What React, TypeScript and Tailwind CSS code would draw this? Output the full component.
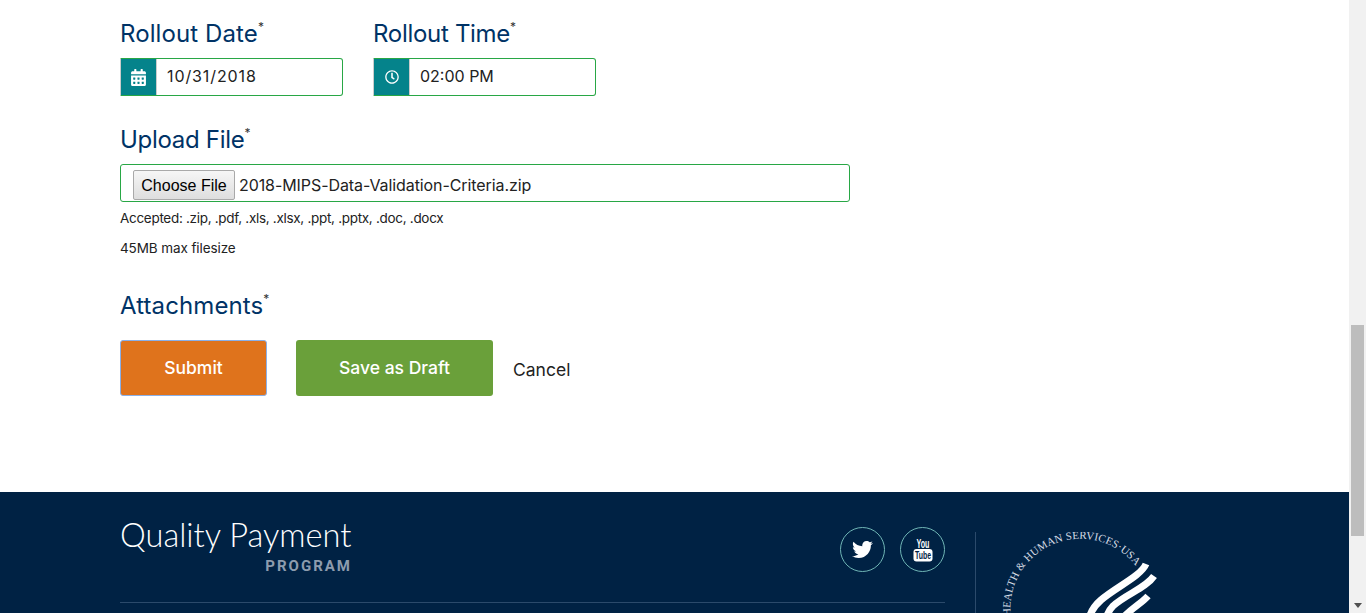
import { FaCalendarAlt, FaRegClock, FaTwitter } from "react-icons/fa";

const bodyFont = "font-['Inter','Noto_Sans',sans-serif]";

function FieldLabel({ text, tight }: { text: string; tight?: boolean }) {
  return (
    <label className={`flex h-[34px] items-start text-[24px] leading-[34px] text-[#003366] ${tight ? "tracking-[-0.3px]" : "tracking-[0.1px]"}`}>
      {text}
      <span className="text-[12px] leading-[20px] text-[#333]">*</span>
    </label>
  );
}

function AddonField({ label, value, icon, spread }: { label: string; value: string; icon: React.ReactNode; spread?: boolean }) {
  return (
    <div className="w-[223px]">
      <FieldLabel text={label} tight={!spread} />
      <div className="mt-[7px] flex h-[38px] rounded-r-[3px] border border-[#28a745] border-l-[#ccc]">
        <span className="flex w-[35px] items-center justify-center bg-[#05838b] text-white">{icon}</span>
        <span className={`flex flex-1 items-center border-l border-[#ccc] pb-[2px] pl-[10px] text-[16px] text-[#222] ${spread ? "tracking-[0.9px]" : ""}`}>{value}</span>
      </div>
    </div>
  );
}

function YouTubeStacked() {
  return (
    <svg className="h-[24px] w-[20px]" viewBox="0 0 20 24">
      <text x="10" y="9.5" fill="#fff" fontFamily="'Liberation Sans', sans-serif" fontSize="12" fontWeight="700" textAnchor="middle" textLength="13" lengthAdjust="spacingAndGlyphs">You</text>
      <rect x="0.5" y="11" width="19" height="12.5" rx="3" fill="#fff" />
      <text x="10" y="21" fill="#002244" fontFamily="'Liberation Sans', sans-serif" fontSize="11" fontWeight="700" textAnchor="middle" textLength="16" lengthAdjust="spacingAndGlyphs">Tube</text>
    </svg>
  );
}

function Seal() {
  return (
    <svg className="ml-[1px] h-[85px] w-[190px] shrink-0" viewBox="0 0 190 85">
      <defs>
        <path id="sealArc" d="M 34 86 A 70 70 0 0 1 158 33" />
      </defs>
      <text fill="#d5dbe3" fontFamily="'Liberation Serif', serif" fontSize="11" letterSpacing="0.1">
        <textPath href="#sealArc" startOffset="2">HEALTH &amp; HUMAN SERVICES·USA</textPath>
      </text>
      <g fill="none" stroke="#fff">
        <path d="M 169 32 C 164 44 139 55 124 68 C 117 74 113 80 111 90" strokeWidth="7" />
        <path d="M 177 44 C 169 56 149 62 136 74 C 131 79 129 85 127 92" strokeWidth="7" />
        <path d="M 171 64 C 164 72 154 76 144 88" strokeWidth="7" />
      </g>
    </svg>
  );
}

export default function App() {
  return (
    <div className={`flex h-[613px] w-full overflow-hidden bg-white ${bodyFont}`}>
      <div className="flex min-w-0 flex-1 flex-col">
        <main className="h-[492px] pl-[120px] pt-[17px]">
          <div className="flex gap-[30px]">
            <AddonField label="Rollout Date" value="10/31/2018" spread icon={<FaCalendarAlt className="text-[17px]" />} />
            <AddonField label="Rollout Time" value="02:00 PM" icon={<FaRegClock className="text-[14px]" />} />
          </div>

          <div className="mt-[27px] w-[730px]">
            <FieldLabel text="Upload File" tight />
            <div className="mt-[7px] flex h-[38px] items-center rounded-[3px] border border-[#28a745] pl-[12px] text-[16px] text-[#222]">
              <button className="mt-[4px] h-[30px] w-[102px] rounded-[2px] border border-[#a9a9a9] bg-gradient-to-b from-[#f6f6f6] to-[#dedede] pt-px font-['Liberation_Sans',sans-serif] text-[16px] text-black">
                Choose File
              </button>
              <span className="ml-[4px] mt-[4px] tracking-[-0.08px]">2018-MIPS-Data-Validation-Criteria.zip</span>
            </div>
          </div>
          <p className="mt-[6px] h-[20px] text-[13.5px] leading-[20px] tracking-[-0.3px] text-[#222]">Accepted: .zip, .pdf, .xls, .xlsx, .ppt, .pptx, .doc, .docx</p>
          <p className="mt-[10px] h-[20px] text-[13.5px] leading-[20px] tracking-[-0.1px] text-[#222]">45MB max filesize</p>

          <div className="mt-[31px]">
            <FieldLabel text="Attachments" />
          </div>

          <div className="mt-[17px] flex items-start">
            <button className="h-[56px] w-[147px] rounded-[3px] border border-[#8ab0e8] bg-[#df731c] text-[17.5px] font-medium text-white">
              Submit
            </button>
            <button className="ml-[29px] h-[56px] w-[197px] rounded-[3px] bg-[#6aa03a] text-[17.5px] font-medium text-white">
              Save as Draft
            </button>
            <span className="ml-[20px] mt-[18px] text-[17.5px] leading-[24px] text-[#222]">Cancel</span>
          </div>
        </main>

        <footer className="flex h-[121px] overflow-hidden bg-[#002244] pl-[120px] pt-[24px]">
          <div className="w-[825px] shrink-0">
            <div className="flex h-[87px] items-start justify-between border-b border-[#2b4a6b]">
              <div className="flex w-[232px] flex-col">
                <span className="whitespace-nowrap font-['Lato',sans-serif] text-[32.6px] font-light leading-[38px] text-white">Quality Payment</span>
                <span className="mt-[4px] self-end font-['Roboto',sans-serif] text-[15px] font-bold leading-[16px] tracking-[2px] text-[#8d9cae]">PROGRAM</span>
              </div>
              <div className="mt-[11px] flex gap-[15px]">
                <a className="flex h-[45px] w-[45px] items-center justify-center rounded-full border border-[#6fb5b5] text-[21px] text-white"><FaTwitter /></a>
                <a className="flex h-[45px] w-[45px] items-center justify-center rounded-full border border-[#6fb5b5] text-white"><YouTubeStacked /></a>
              </div>
            </div>
          </div>
          <div className="ml-[30px] mt-[16px] flex h-[85px] border-l border-[#2b4a6b]">
            <Seal />
          </div>
        </footer>
      </div>

      {/* scrollbar */}
      <div className="relative flex w-[17px] shrink-0 flex-col items-center bg-[#f1f1f1]">
        <div className="mt-[325px] h-[211px] w-[13px] bg-[#bdbdbd]" />
        <div className="absolute bottom-[5px] h-0 w-0 border-x-[4px] border-t-[5px] border-x-transparent border-t-[#505050]" />
      </div>
    </div>
  );
}
